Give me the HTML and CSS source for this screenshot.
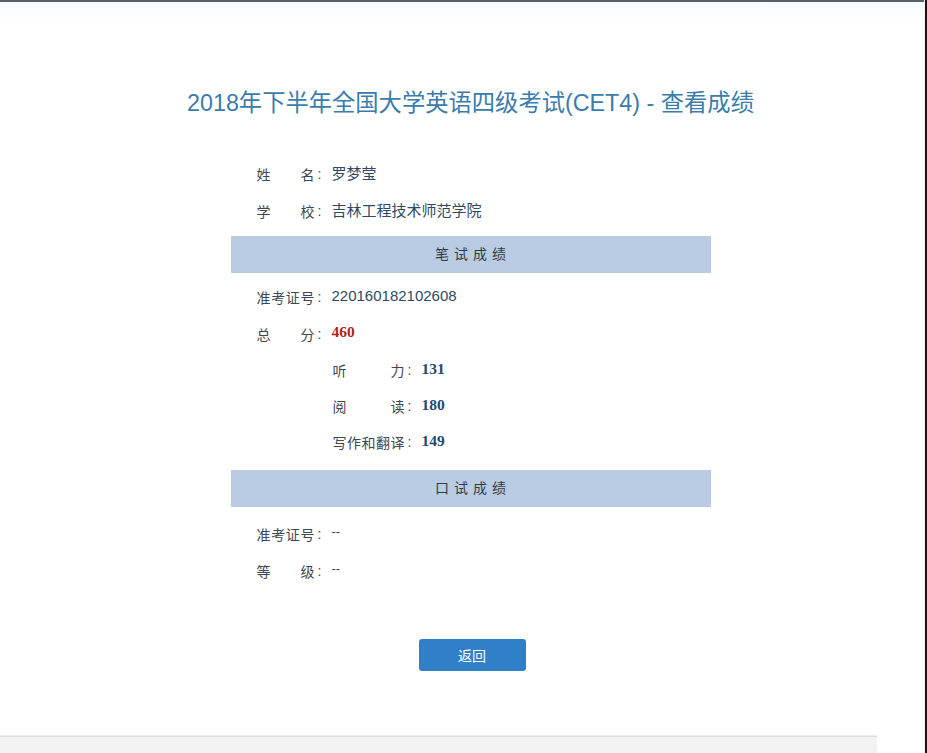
FILE: index.html
```html
<!DOCTYPE html>
<html lang="zh-CN">
<head>
<meta charset="utf-8">
<title>查看成绩</title>
<link rel="stylesheet" href="styles.css">
</head>
<body>
<div class="screen">
  <main class="page">
    <h1 class="title">2018年下半年全国大学英语四级考试(CET4) - 查看成绩</h1>
    <section class="card">
      <div class="row"><span class="label">姓名</span><span class="colon">:</span><span class="value">罗梦莹</span></div>
      <div class="row"><span class="label">学校</span><span class="colon">:</span><span class="value">吉林工程技术师范学院</span></div>
      <div class="band">笔试成绩</div>
      <div class="group">
        <div class="row"><span class="label">准考证号</span><span class="colon">:</span><span class="value">220160182102608</span></div>
        <div class="row"><span class="label">总分</span><span class="colon">:</span><span class="score total">460</span></div>
        <div class="row sub"><span class="label wide">听力</span><span class="colon">:</span><span class="score">131</span></div>
        <div class="row sub"><span class="label wide">阅读</span><span class="colon">:</span><span class="score">180</span></div>
        <div class="row sub"><span class="label wide">写作和翻译</span><span class="colon">:</span><span class="score">149</span></div>
      </div>
      <div class="band">口试成绩</div>
      <div class="group">
        <div class="row"><span class="label">准考证号</span><span class="colon">:</span><span class="value dash">--</span></div>
        <div class="row"><span class="label">等级</span><span class="colon">:</span><span class="value dash">--</span></div>
      </div>
      <div class="actions"><button class="back" type="button">返回</button></div>
    </section>
  </main>
  <div class="statusbar"></div>
</div>
<div class="edge"></div>
</body>
</html>
```
FILE: styles.css
```css
html, body {
  margin: 0;
  padding: 0;
  height: 753px;
  overflow: hidden;
  background: #ffffff;
}
body {
  display: flex;
  font-family: "Liberation Sans", "Noto Sans CJK SC", sans-serif;
  color: #3b4750;
}
.screen {
  flex: 1;
  display: flex;
  flex-direction: column;
  border-top: 2px solid #56616a;
  min-width: 0;
}
.edge {
  width: 2px;
  background: #151515;
  border-left: 1px solid #f3f3f3;
}
.page {
  flex: 1;
  padding-left: 17px;
  background: linear-gradient(#f8fbfd 0, #fbfdfe 14px, #ffffff 16px);
}
.title {
  margin: 85px 0 0;
  font-size: 23.3px;
  line-height: 32px;
  font-weight: normal;
  text-align: center;
  color: #3a7cab;
}
.card {
  width: 480px;
  margin: 37px auto 0;
}
.row {
  display: flex;
  align-items: center;
  height: 37px;
  padding-left: 26px;
  padding-bottom: 2px;
  box-sizing: border-box;
  font-size: 14px;
}
.row.sub {
  padding-left: 102px;
  height: 36px;
}
.label {
  width: 58px;
  text-align-last: justify;
  color: #3d4850;
}
.label.wide {
  width: 72px;
}
.colon {
  width: 14px;
  padding-left: 3px;
  color: #3d4850;
}
.value {
  font-size: 15px;
  color: #2d4a66;
  margin-top: -3px;
}
.value.dash {
  font-size: 13px;
  margin-top: -5px;
}
.score {
  font-family: "Liberation Serif", "DejaVu Serif", serif;
  font-weight: bold;
  font-size: 15.5px;
  color: #1f4a6e;
  margin-top: -3px;
}
.score.total {
  color: #b0261c;
}
.band {
  height: 37px;
  box-sizing: border-box;
  margin: 6px 0 6px;
  padding-bottom: 3px;
  padding-left: 5px;
  background: #b9cce4;
  display: flex;
  align-items: center;
  justify-content: center;
  font-size: 14px;
  letter-spacing: 5px;
  color: #333b42;
}
.group + .band {
  margin-top: 9px;
  margin-bottom: 9px;
}
.actions {
  display: flex;
  justify-content: center;
  margin-top: 49px;
  padding-left: 3px;
}
.back {
  width: 107px;
  height: 32px;
  border: none;
  border-radius: 3px;
  background: #2f80c8;
  color: #ffffff;
  font-family: "Liberation Sans", "Noto Sans CJK SC", sans-serif;
  font-size: 14px;
  padding: 0;
}
.statusbar {
  width: 877px;
  height: 16px;
  background: #f3f3f3;
  border-top: 1px solid #dcdcdc;
  box-shadow: 0 -1px 0 #ededed;
}
```
